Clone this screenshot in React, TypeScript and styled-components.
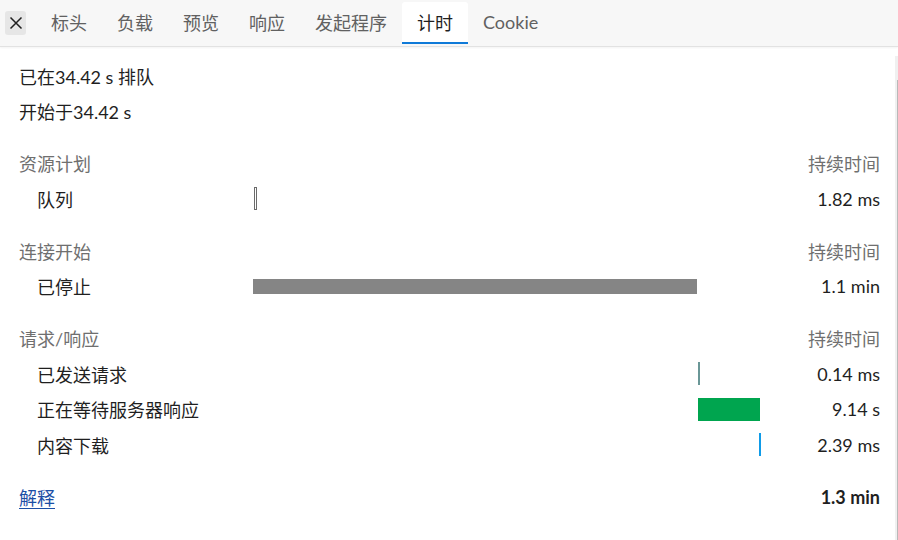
import styled, { createGlobalStyle } from "styled-components";

const GlobalStyle = createGlobalStyle`
  html, body {
    margin: 0;
    padding: 0;
    background: #ffffff;
  }
  body {
    font-family: "Lato", "Noto Sans CJK SC", sans-serif;
    color: #1f1f1f;
  }
`;

const Page = styled.div`
  width: 898px;
  height: 540px;
  display: flex;
  flex-direction: column;
  overflow: hidden;
`;

const TabBar = styled.div`
  height: 46px;
  display: flex;
  align-items: stretch;
  background: #f7f7f7;
  border-bottom: 1px solid #e2e2e2;
  box-shadow: 0 1px 2px rgba(0, 0, 0, 0.05);
  padding-left: 5px;
  font-family: "Lato", "Noto Sans CJK SC", sans-serif;
  font-size: 18px;
`;

const CloseButton = styled.div`
  width: 21px;
  height: 24px;
  margin-top: 11px;
  margin-right: 10px;
  border-radius: 3px;
  background: #e6e6e6;
  display: flex;
  align-items: center;
  justify-content: center;
`;

const Tab = styled.div<{ $active?: boolean }>`
  display: flex;
  align-items: center;
  padding: 0 15px;
  margin-top: 2px;
  height: 42px;
  color: ${(p) => (p.$active ? "#1f1f1f" : "#616161")};
  background: ${(p) => (p.$active ? "#ffffff" : "transparent")};
  border-bottom: 2px solid ${(p) => (p.$active ? "#0f7ad8" : "transparent")};
  border-radius: 3px 3px 0 0;
  box-sizing: border-box;
`;

const Body = styled.div`
  flex: 1;
  display: flex;
  min-height: 0;
`;

const Content = styled.div`
  flex: 1;
  padding: 11px 15px 0 19px;
  font-size: 18px;
`;

const Scrollbar = styled.div`
  width: 3px;
  margin-top: 9px;
  background: #f0f0f0;
  display: flex;
  justify-content: flex-end;
`;

const ScrollThumb = styled.div`
  width: 1px;
  margin-top: 24px;
  height: 100%;
  background: #b9b9b9;
`;

const InfoLine = styled.div`
  height: 35.5px;
  display: flex;
  align-items: center;
`;

const Section = styled.div`
  margin-top: 16.5px;
`;

const Row = styled.div<{ $indent?: boolean }>`
  height: 35.5px;
  display: grid;
  grid-template-columns: ${(p) => (p.$indent ? "216px" : "234px")} 507px 1fr;
  padding-left: ${(p) => (p.$indent ? "18px" : "0")};
  align-items: center;
`;

const Heading = styled.span`
  color: #6f6f6f;
`;

const Value = styled.span<{ $bold?: boolean; $muted?: boolean }>`
  justify-self: end;
  color: ${(p) => (p.$muted ? "#6f6f6f" : "#1f1f1f")};
  font-weight: ${(p) => (p.$bold ? 700 : 400)};
`;

const Track = styled.div`
  height: 100%;
  display: flex;
  align-items: center;
`;

const Bar = styled.div<{ $color: string; $h: number; $outline?: boolean }>`
  height: ${(p) => p.$h}px;
  box-sizing: border-box;
  background: ${(p) => (p.$outline ? "#ffffff" : p.$color)};
  border: ${(p) => (p.$outline ? `1px solid ${p.$color}` : "none")};
  flex: none;
`;

const Link = styled.a`
  color: #1c4fa6;
  text-decoration: underline;
  text-underline-offset: 3px;
`;

const TOTAL = 507;

interface TimingRow {
  label: string;
  start: number;
  width: number;
  color: string;
  height: number;
  outline?: boolean;
  value: string;
}

interface TimingSection {
  title: string;
  rows: TimingRow[];
}

const sections: TimingSection[] = [
  {
    title: "资源计划",
    rows: [
      { label: "队列", start: 1, width: 3, color: "#6b6b6b", height: 23, outline: true, value: "1.82 ms" },
    ],
  },
  {
    title: "连接开始",
    rows: [
      { label: "已停止", start: 0, width: 444, color: "#858585", height: 15, value: "1.1 min" },
    ],
  },
  {
    title: "请求/响应",
    rows: [
      { label: "已发送请求", start: 445, width: 2, color: "#6a9797", height: 23, value: "0.14 ms" },
      { label: "正在等待服务器响应", start: 445, width: 62, color: "#00a54f", height: 23, value: "9.14 s" },
      { label: "内容下载", start: 507, width: 2, color: "#0f9be8", height: 23, value: "2.39 ms" },
    ],
  },
];

const tabs = ["标头", "负载", "预览", "响应", "发起程序", "计时", "Cookie"];

function App() {
  return (
    <>
      <GlobalStyle />
      <Page>
        <TabBar>
          <CloseButton>
            <svg width="14" height="14" viewBox="0 0 14 14">
              <path d="M1.5 1.5 L12.5 12.5 M12.5 1.5 L1.5 12.5" stroke="#1f1f1f" strokeWidth="1.5" fill="none" />
            </svg>
          </CloseButton>
          {tabs.map((t) => (
            <Tab key={t} $active={t === "计时"}>
              {t}
            </Tab>
          ))}
        </TabBar>
        <Body>
          <Content>
            <InfoLine>已在34.42 s 排队</InfoLine>
            <InfoLine>开始于34.42 s</InfoLine>
            {sections.map((s) => (
              <Section key={s.title}>
                <Row>
                  <Heading>{s.title}</Heading>
                  <span />
                  <Value $muted>持续时间</Value>
                </Row>
                {s.rows.map((r) => (
                  <Row $indent key={r.label}>
                    <span>{r.label}</span>
                    <Track>
                      <Bar
                        $color={r.color}
                        $h={r.height}
                        $outline={r.outline}
                        style={{ marginLeft: Math.min(r.start, TOTAL - 1), width: r.width }}
                      />
                    </Track>
                    <Value>{r.value}</Value>
                  </Row>
                ))}
              </Section>
            ))}
            <Section>
              <Row>
                <Link>解释</Link>
                <span />
                <Value $bold>1.3 min</Value>
              </Row>
            </Section>
          </Content>
          <Scrollbar>
            <ScrollThumb />
          </Scrollbar>
        </Body>
      </Page>
    </>
  );
}

export default App;
